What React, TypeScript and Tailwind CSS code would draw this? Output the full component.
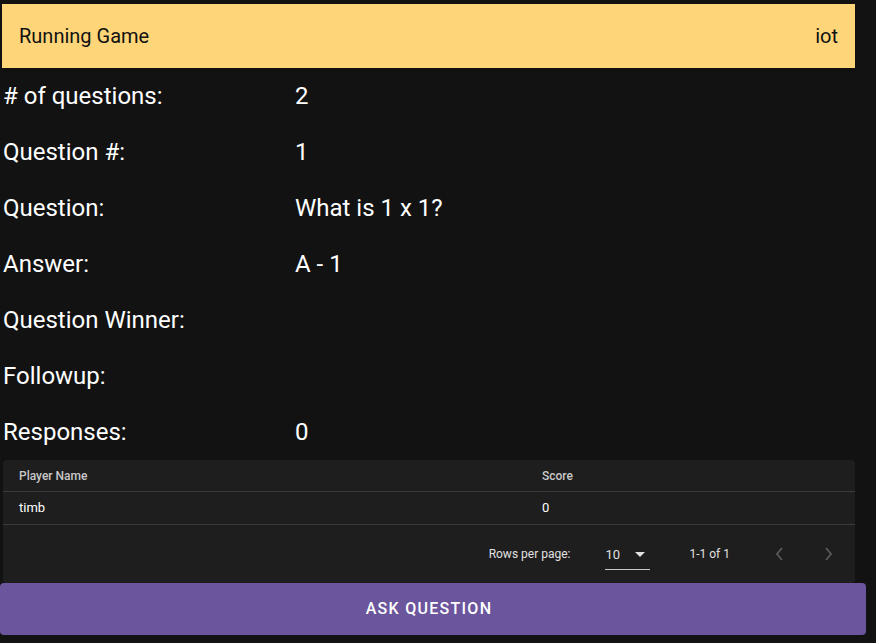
import React from 'react';

const rows: [string, string][] = [
  ['# of questions:', '2'],
  ['Question #:', '1'],
  ['Question:', 'What is 1 x 1?'],
  ['Answer:', 'A - 1'],
  ['Question Winner:', ''],
  ['Followup:', ''],
  ['Responses:', '0'],
];

export default function App() {
  return (
    <div className="w-[876px] h-[643px] bg-[#121212] text-white overflow-hidden font-['Roboto',sans-serif]">
      {/* Top bar */}
      <div className="pt-1 pl-[2px] w-[855px]">
        <div className="h-16 bg-[#ffd579] text-[#111] flex items-center justify-between pl-[17px] pr-[17px] text-xl shadow">
          <span>Running Game</span>
          <span>iot</span>
        </div>
      </div>

      {/* Game details */}
      <div className="pl-[3px]">
        {rows.map(([label, value]) => (
          <div key={label} className="h-14 flex items-center text-2xl">
            <div className="w-[292px]">{label}</div>
            <div>{value}</div>
          </div>
        ))}
      </div>

      {/* Players table */}
      <div className="ml-[3px] w-[852px] bg-[#1e1e1e] rounded text-white">
        <div className="h-[32px] flex items-center border-b border-[#3a3a3a] text-xs font-medium text-[#c8c8c8]">
          <div className="pl-4 w-[539px]">Player Name</div>
          <div>Score</div>
        </div>
        <div className="h-[33px] flex items-center border-b border-[#3a3a3a] text-[13px]">
          <div className="pl-4 w-[539px]">timb</div>
          <div>0</div>
        </div>
        <div className="h-[58px] flex items-center justify-end text-xs text-[#e0e0e0]">
          <span>Rows per page:</span>
          <div className="ml-[35px] w-[45px] h-[29px] flex items-center border-b border-[#c8c8c8] mt-[3px]">
            <span className="text-[13px]">10</span>
            <svg className="ml-[15px]" width="10" height="6" viewBox="0 0 10 6"><path d="M0 0h10L5 5z" fill="#e0e0e0" /></svg>
          </div>
          <span className="ml-[39px]">1-1 of 1</span>
          <div className="ml-[44px] flex items-center gap-[40px] pr-[21px] text-[#5a5a5a]">
            <svg width="10" height="14" viewBox="0 0 10 14"><path d="M8 1L3 7l5 6" stroke="currentColor" strokeWidth="1.8" fill="none" /></svg>
            <svg width="10" height="14" viewBox="0 0 10 14"><path d="M2 1l5 6-5 6" stroke="currentColor" strokeWidth="1.8" fill="none" /></svg>
          </div>
        </div>
      </div>

      {/* Action button */}
      <button className="w-[866px] h-[52px] bg-[#6b559c] rounded pr-2 text-base font-medium tracking-[0.08em] text-white">
        ASK QUESTION
      </button>
    </div>
  );
}
